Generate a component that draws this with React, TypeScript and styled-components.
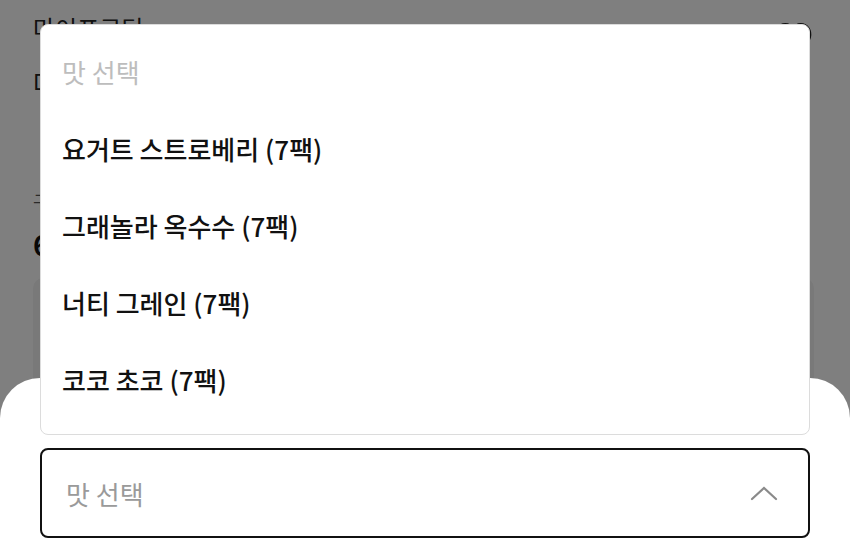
import styled, { createGlobalStyle } from "styled-components";

const GlobalStyle = createGlobalStyle`
  html, body {
    margin: 0;
    padding: 0;
    background: #ffffff;
  }
  body {
    font-family: "Noto Sans CJK KR", "Noto Sans", sans-serif;
    color: #111111;
  }
`

const Screen = styled.div`
  position: relative;
  width: 850px;
  height: 550px;
  overflow: hidden;
  background: #ffffff;
`

const Page = styled.div`
  padding: 10px 36px 0 33px;
  display: flex;
  flex-direction: column;
`

const TopRow = styled.div`
  display: flex;
  align-items: flex-start;
  justify-content: space-between;
  height: 40px;
`

const Brand = styled.div`
  font-size: 24px;
  color: #222;
`

const HeartBox = styled.div`
  padding-top: 11px;
`

const Title = styled.div`
  margin-top: 14px;
  font-size: 22px;
  color: #222;
`

const PriceLabel = styled.div`
  margin-top: 92px;
  font-size: 18px;
  color: #555;
`

const Price = styled.div`
  margin-top: 10px;
  font-size: 28px;
  font-weight: 700;
  color: #111;
`

const InfoCard = styled.div`
  margin-top: 14px;
  height: 140px;
  border-radius: 10px;
  background: #f3f3f3;
`

const Dim = styled.div`
  position: absolute;
  inset: 0;
  background: rgba(0, 0, 0, 0.5);
  display: flex;
  flex-direction: column;
  justify-content: flex-end;
`

const Sheet = styled.div`
  height: 172px;
  box-sizing: border-box;
  background: #ffffff;
  border-radius: 40px 40px 0 0;
  padding: 70px 40px 0 40px;
`

const SelectWrap = styled.div`
  position: relative;
`

const SelectBox = styled.div`
  height: 90px;
  box-sizing: border-box;
  border: 2px solid #111;
  border-radius: 8px;
  display: flex;
  align-items: center;
  justify-content: space-between;
  padding: 0 30px 0 24px;
`

const Placeholder = styled.span<{ $light?: boolean }>`
  font-size: 26px;
  font-weight: 400;
  color: ${(p) => (p.$light ? "#bdbdbd" : "#9a9a9a")};
`

const Menu = styled.ul`
  position: absolute;
  left: 0;
  right: 0;
  bottom: calc(100% + 13px);
  margin: 0;
  padding: 8px 0 16px 0;
  list-style: none;
  background: #ffffff;
  border: 1px solid #dcdcdc;
  border-radius: 8px;
  box-sizing: border-box;
  height: 411px;
`

const Option = styled.li`
  height: 77px;
  display: flex;
  align-items: center;
  padding: 0 21px;
  font-size: 26px;
  font-weight: 500;
  color: #111;
`

const flavors = [
  "요거트 스트로베리 (7팩)",
  "그래놀라 옥수수 (7팩)",
  "너티 그레인 (7팩)",
  "코코 초코 (7팩)",
]

function Heart() {
  return (
    <svg width="42" height="38" viewBox="0 0 24 22" fill="none" stroke="#222" strokeWidth="1.8">
      <path d="M12 20s-8-5-9.5-10.5C1.5 5.5 4 2 7.5 2c2 0 3.5 1.2 4.5 2.8C13 3.2 14.5 2 16.5 2 20 2 22.5 5.5 21.5 9.5 20 15 12 20 12 20z" />
    </svg>
  )
}

function Chevron() {
  return (
    <svg width="28" height="16" viewBox="0 0 28 16" fill="none" stroke="#8a8a8a" strokeWidth="2.2" strokeLinecap="round">
      <path d="M2 14 L14 3 L26 14" />
    </svg>
  )
}

export default function App() {
  return (
    <Screen>
      <GlobalStyle />
      <Page>
        <TopRow>
          <Brand>마이프로틴 &gt;</Brand>
          <HeartBox>
            <Heart />
          </HeartBox>
        </TopRow>
        <Title>Daily 그래놀라 7팩 세트</Title>
        <PriceLabel>구매 혜택가</PriceLabel>
        <Price>6,900원</Price>
        <InfoCard />
      </Page>
      <Dim>
        <Sheet>
          <SelectWrap>
            <Menu>
              <Option>
                <Placeholder $light>맛 선택</Placeholder>
              </Option>
              {flavors.map((f) => (
                <Option key={f}>{f}</Option>
              ))}
            </Menu>
            <SelectBox>
              <Placeholder>맛 선택</Placeholder>
              <Chevron />
            </SelectBox>
          </SelectWrap>
        </Sheet>
      </Dim>
    </Screen>
  )
}
